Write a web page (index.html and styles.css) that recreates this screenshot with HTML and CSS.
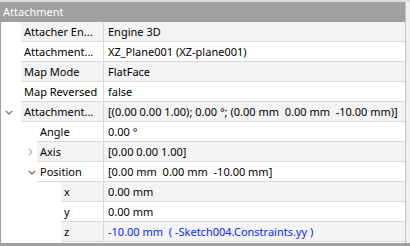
FILE: index.html
```html
<!doctype html>
<html lang="en">
    <head>
        <meta charset="utf-8">
        <meta name="viewport" content="width=device-width, initial-scale=1">
        <title>Property View</title>
        <link rel="stylesheet" href="styles.css">
    </head>
    <body>
        <div class="panel">
            <div class="tree">
                <div class="group">Attachment</div>

                <div class="row alt">
                    <div class="branch lvl0"></div>
                    <div class="name">Attacher En...</div>
                    <div class="value">Engine 3D</div>
                </div>
                <div class="row">
                    <div class="branch lvl0"></div>
                    <div class="name">Attachment...</div>
                    <div class="value">XZ_Plane001 (XZ-plane001)</div>
                </div>
                <div class="row alt">
                    <div class="branch lvl0"></div>
                    <div class="name">Map Mode</div>
                    <div class="value">FlatFace</div>
                </div>
                <div class="row">
                    <div class="branch lvl0"></div>
                    <div class="name">Map Reversed</div>
                    <div class="value">false</div>
                </div>
                <div class="row alt">
                    <div class="branch lvl0">
                        <svg class="chev open" width="8" height="5" viewBox="0 0 8 5"><path d="M0.8 0.8 L4 4 L7.2 0.8" /></svg>
                    </div>
                    <div class="name">Attachment...</div>
                    <div class="value">[(0.00 0.00 1.00); 0.00 °; (0.00 mm  0.00 mm  -10.00 mm)]</div>
                </div>
                <div class="row">
                    <div class="branch lvl1"></div>
                    <div class="name">Angle</div>
                    <div class="value">0.00 °</div>
                </div>
                <div class="row alt">
                    <div class="branch lvl1">
                        <svg class="chev closed" width="5" height="8" viewBox="0 0 5 8"><path d="M0.8 0.8 L4 4 L0.8 7.2" /></svg>
                    </div>
                    <div class="name">Axis</div>
                    <div class="value">[0.00 0.00 1.00]</div>
                </div>
                <div class="row">
                    <div class="branch lvl1">
                        <svg class="chev open" width="8" height="5" viewBox="0 0 8 5"><path d="M0.8 0.8 L4 4 L7.2 0.8" /></svg>
                    </div>
                    <div class="name">Position</div>
                    <div class="value">[0.00 mm  0.00 mm  -10.00 mm]</div>
                </div>
                <div class="row alt">
                    <div class="branch lvl2"></div>
                    <div class="name">x</div>
                    <div class="value">0.00 mm</div>
                </div>
                <div class="row">
                    <div class="branch lvl2"></div>
                    <div class="name">y</div>
                    <div class="value">0.00 mm</div>
                </div>
                <div class="row alt">
                    <div class="branch lvl2"></div>
                    <div class="name">z</div>
                    <div class="value expr">-10.00 mm  ( -Sketch004.Constraints.yy )</div>
                </div>
            </div>
            <div class="scroll"></div>
        </div>
    </body>
</html>
```

FILE: styles.css
```css
:root {
    --gris-borde: #a0a0a0;
    --gris-fila: #f3f3f3;
    --gris-linea: #dadada;
}

body {
    margin: 0;
    padding: 0;
    background-color: #ffffff;
    font-family: "Noto Sans", "Open Sans", sans-serif;
    font-size: 11px;
    color: #000;
}

.panel {
    display: flex;
    width: 410px;
    height: 246px;
    box-sizing: border-box;
    border-top: 2px solid #dcdcdc;
    border-bottom: 3px solid var(--gris-borde);
    overflow: hidden;
}

.tree {
    width: 406px;
    border-left: 1px solid var(--gris-borde);
    border-right: 1px solid #c4c4c4;
    box-sizing: border-box;
    background-color: #fff;
}

.scroll {
    flex: 1;
    background-color: #f0f0f0;
}

.group {
    height: 20px;
    line-height: 20px;
    padding-left: 2px;
    background-color: var(--gris-borde);
    color: #fff;
}

.row {
    display: flex;
    height: 20px;
}

.branch {
    display: flex;
    align-items: center;
    flex-shrink: 0;
    background-color: #fff;
}

.lvl0 {
    width: 20px;
    padding-left: 4px;
    box-sizing: border-box;
}

.lvl1 {
    width: 36px;
    padding-left: 27px;
    box-sizing: border-box;
}

.lvl2 {
    width: 60px;
}

.name,
.value {
    line-height: 19px;
    border-bottom: 1px solid var(--gris-linea);
    white-space: pre;
    overflow: hidden;
}

.name {
    flex: 1;
    padding-left: 3px;
    border-right: 1px solid var(--gris-linea);
}

.value {
    width: 301px;
    flex-shrink: 0;
    padding-left: 4px;
    box-sizing: border-box;
}

.row.alt .name,
.row.alt .value {
    background-color: var(--gris-fila);
}

.expr {
    color: #0a28f0;
}

.chev {
    fill: none;
    stroke-width: 1.2;
}

.chev.open {
    stroke: #6a6a6a;
}

.chev.closed {
    stroke: #b0b0b0;
}
```
